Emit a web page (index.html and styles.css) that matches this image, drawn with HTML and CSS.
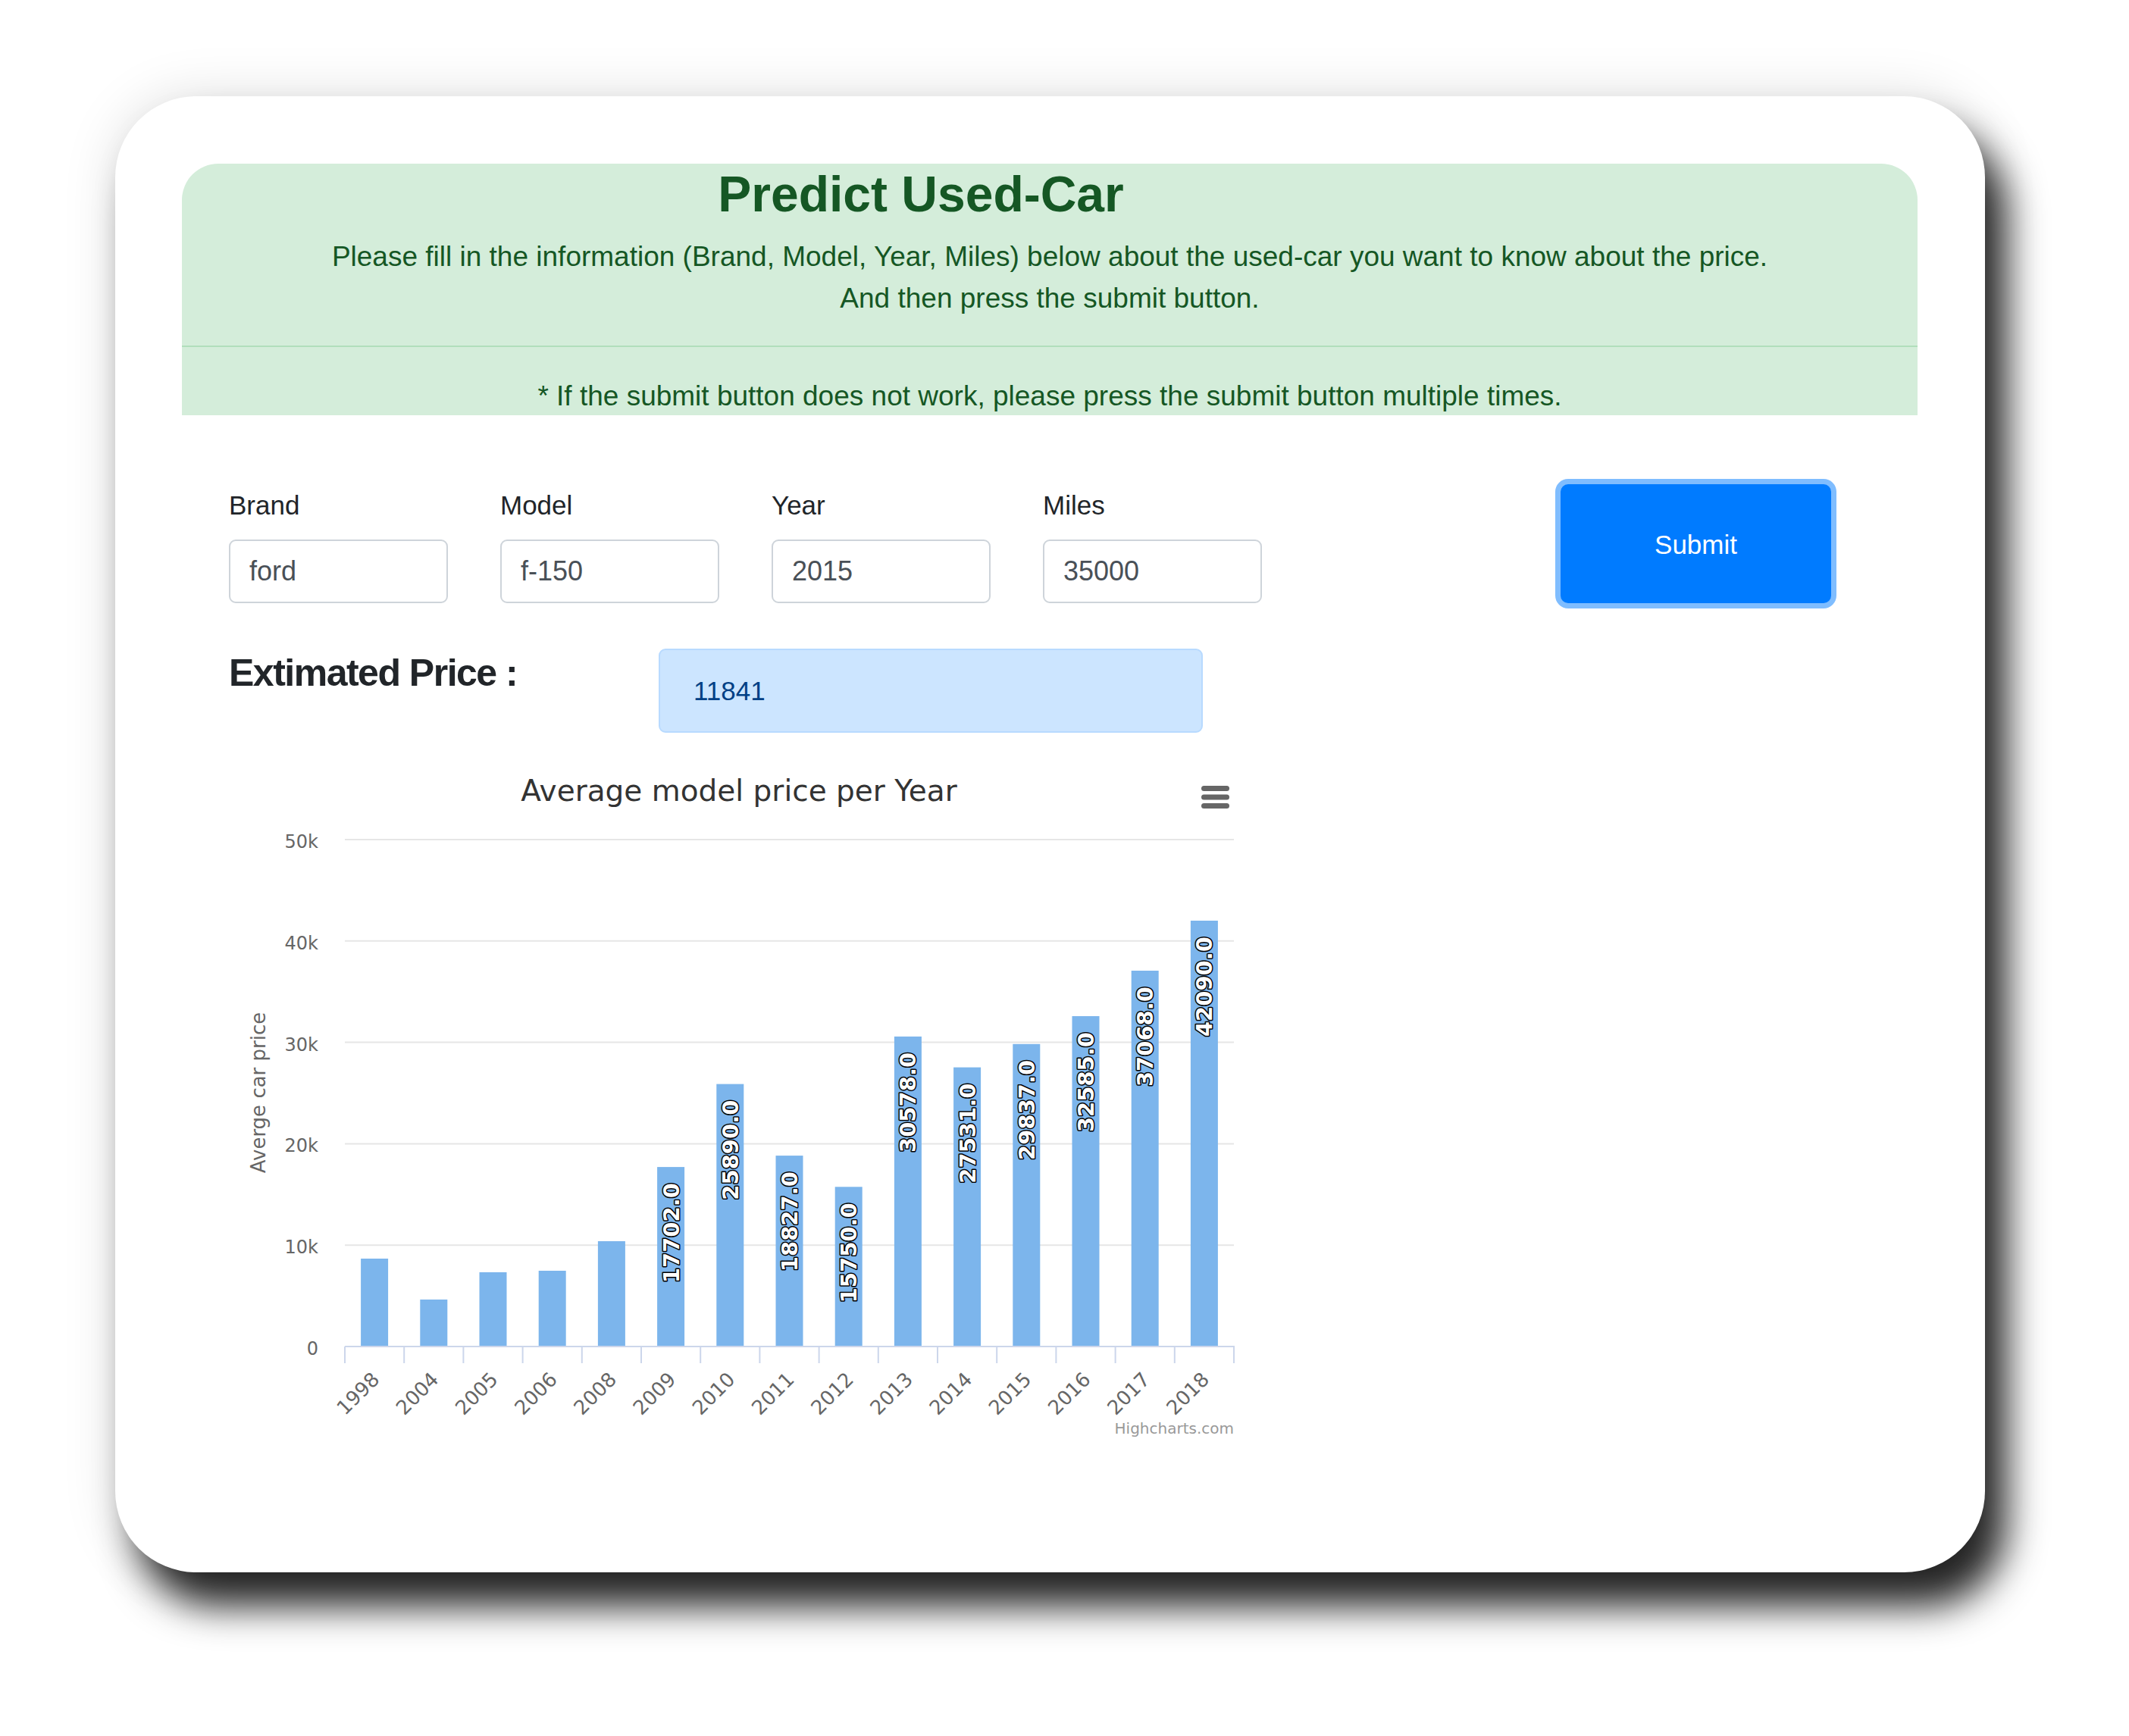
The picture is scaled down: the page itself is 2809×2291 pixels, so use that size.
FILE: index.html
```html
<!DOCTYPE html>
<html lang="en">
<head>
<meta charset="utf-8">
<title>Predict Used-Car</title>
<link rel="stylesheet" href="styles.css">
</head>
<body>
<div class="card">
  <div class="alert">
    <h1 class="title">Predict Used-Car</h1>
    <p class="lead">Please fill in the information (Brand, Model, Year, Miles) below about the used-car you want to know about the price.<br>And then press the submit button.</p>
    <hr class="divider">
    <p class="note">* If the submit button does not work, please press the submit button multiple times.</p>
  </div>
  <div class="content">
    <form class="form-row">
      <div class="field"><label>Brand</label><input type="text" value="ford"></div>
      <div class="field"><label>Model</label><input type="text" value="f-150"></div>
      <div class="field"><label>Year</label><input type="text" value="2015"></div>
      <div class="field"><label>Miles</label><input type="text" value="35000"></div>
      <button type="button" class="submit">Submit</button>
    </form>
    <div class="price-row">
      <h4 class="price-label">Extimated Price :</h4>
      <div class="price-box">11841</div>
    </div>
    <div class="chart">
      <svg width="1348" height="905" viewBox="0 0 1348 905" xmlns="http://www.w3.org/2000/svg">
        <text class="c-title" x="673" y="57" text-anchor="middle">Average model price per Year</text>
        <g class="c-menu">
          <line x1="1286.5" y1="40.5" x2="1316.5" y2="40.5"/>
          <line x1="1286.5" y1="52" x2="1316.5" y2="52"/>
          <line x1="1286.5" y1="63.5" x2="1316.5" y2="63.5"/>
        </g>
        <g class="c-grid">
          <line x1="153" y1="108" x2="1326" y2="108"/>
          <line x1="153" y1="241.8" x2="1326" y2="241.8"/>
          <line x1="153" y1="375.6" x2="1326" y2="375.6"/>
          <line x1="153" y1="509.4" x2="1326" y2="509.4"/>
          <line x1="153" y1="643.2" x2="1326" y2="643.2"/>
        </g>
        <g class="c-ylab">
          <text x="118" y="119" text-anchor="end">50k</text>
          <text x="118" y="252.8" text-anchor="end">40k</text>
          <text x="118" y="386.6" text-anchor="end">30k</text>
          <text x="118" y="520.4" text-anchor="end">20k</text>
          <text x="118" y="654.2" text-anchor="end">10k</text>
          <text x="118" y="788" text-anchor="end">0</text>
        </g>
        <text class="c-ytitle" transform="translate(48 442) rotate(-90)" text-anchor="middle">Averge car price</text>
        <g class="c-bars">
          <rect x="174.1" y="661.0" width="36" height="116.0"/>
          <rect x="252.3" y="715.0" width="36" height="62.0"/>
          <rect x="330.5" y="679.0" width="36" height="98.0"/>
          <rect x="408.7" y="677.0" width="36" height="100.0"/>
          <rect x="486.9" y="638.0" width="36" height="139.0"/>
          <rect x="565.1" y="540.1" width="36" height="236.9"/>
          <rect x="643.3" y="430.6" width="36" height="346.4"/>
          <rect x="721.5" y="525.1" width="36" height="251.9"/>
          <rect x="799.7" y="566.3" width="36" height="210.7"/>
          <rect x="877.9" y="367.9" width="36" height="409.1"/>
          <rect x="956.1" y="408.6" width="36" height="368.4"/>
          <rect x="1034.3" y="377.8" width="36" height="399.2"/>
          <rect x="1112.5" y="341.0" width="36" height="436.0"/>
          <rect x="1190.7" y="281.0" width="36" height="496.0"/>
          <rect x="1268.9" y="215.0" width="36" height="562.0"/>
        </g>
        <g class="c-axis">
          <line x1="153" y1="777" x2="1327" y2="777"/>
          <line x1="153" y1="777" x2="153" y2="799"/>
          <line x1="231.2" y1="777" x2="231.2" y2="799"/>
          <line x1="309.4" y1="777" x2="309.4" y2="799"/>
          <line x1="387.6" y1="777" x2="387.6" y2="799"/>
          <line x1="465.8" y1="777" x2="465.8" y2="799"/>
          <line x1="544" y1="777" x2="544" y2="799"/>
          <line x1="622.2" y1="777" x2="622.2" y2="799"/>
          <line x1="700.4" y1="777" x2="700.4" y2="799"/>
          <line x1="778.6" y1="777" x2="778.6" y2="799"/>
          <line x1="856.8" y1="777" x2="856.8" y2="799"/>
          <line x1="935" y1="777" x2="935" y2="799"/>
          <line x1="1013.2" y1="777" x2="1013.2" y2="799"/>
          <line x1="1091.4" y1="777" x2="1091.4" y2="799"/>
          <line x1="1169.6" y1="777" x2="1169.6" y2="799"/>
          <line x1="1247.8" y1="777" x2="1247.8" y2="799"/>
          <line x1="1326" y1="777" x2="1326" y2="799"/>
        </g>
        <g class="c-dlab" text-anchor="end">
          <text transform="translate(593.6 561.1) rotate(-90)">17702.0</text>
          <text transform="translate(671.8 451.6) rotate(-90)">25890.0</text>
          <text transform="translate(750.0 546.1) rotate(-90)">18827.0</text>
          <text transform="translate(828.2 587.3) rotate(-90)">15750.0</text>
          <text transform="translate(906.4 388.9) rotate(-90)">30578.0</text>
          <text transform="translate(984.6 429.6) rotate(-90)">27531.0</text>
          <text transform="translate(1062.8 398.8) rotate(-90)">29837.0</text>
          <text transform="translate(1141.0 362.0) rotate(-90)">32585.0</text>
          <text transform="translate(1219.2 302.0) rotate(-90)">37068.0</text>
          <text transform="translate(1297.4 236.0) rotate(-90)">42090.0</text>
        </g>
        <g class="c-xlab" text-anchor="end">
          <text transform="translate(200.1 822) rotate(-45)">1998</text>
          <text transform="translate(278.3 822) rotate(-45)">2004</text>
          <text transform="translate(356.5 822) rotate(-45)">2005</text>
          <text transform="translate(434.7 822) rotate(-45)">2006</text>
          <text transform="translate(512.9 822) rotate(-45)">2008</text>
          <text transform="translate(591.1 822) rotate(-45)">2009</text>
          <text transform="translate(669.3 822) rotate(-45)">2010</text>
          <text transform="translate(747.5 822) rotate(-45)">2011</text>
          <text transform="translate(825.7 822) rotate(-45)">2012</text>
          <text transform="translate(903.9 822) rotate(-45)">2013</text>
          <text transform="translate(982.1 822) rotate(-45)">2014</text>
          <text transform="translate(1060.3 822) rotate(-45)">2015</text>
          <text transform="translate(1138.5 822) rotate(-45)">2016</text>
          <text transform="translate(1216.7 822) rotate(-45)">2017</text>
          <text transform="translate(1294.9 822) rotate(-45)">2018</text>
        </g>
        <text class="c-credits" x="1326" y="892" text-anchor="end">Highcharts.com</text>
      </svg>
    </div>
  </div>
</div>
</body>
</html>
```

FILE: styles.css
```css
html, body {
  margin: 0;
  padding: 0;
  background: #ffffff;
}

body {
  min-height: 2291px;
  padding: 127px 0 0 152px;
  box-sizing: border-box;
  font-family: "Liberation Sans", Arial, sans-serif;
  color: #212529;
}

.card {
  box-sizing: border-box;
  width: 2467px;
  height: 1948px;
  padding: 89px 89px 0 88px;
  background: #ffffff;
  border-radius: 107px;
  box-shadow: 28px 45px 50px rgba(0, 0, 0, 0.85), 0 0 70px rgba(0, 0, 0, 0.13);
}

.alert {
  box-sizing: border-box;
  height: 332px;
  overflow: hidden;
  background: #d4edda;
  color: #155724;
  border-radius: 48px 48px 0 0;
  text-align: center;
}

.title {
  margin: 0;
  padding-right: 340px;
  font-size: 66px;
  line-height: 80px;
  font-weight: 700;
}

.lead {
  margin: 15px 0 0;
  font-size: 37px;
  line-height: 55px;
}

.divider {
  margin: 35px 0 0;
  height: 0;
  border: 0;
  border-top: 2px solid #b1dfbb;
}

.note {
  margin: 37px 0 0;
  font-size: 37px;
  line-height: 55px;
}

.content {
  padding-left: 62px;
}

.form-row {
  display: flex;
  align-items: flex-start;
  margin: 92px 0 0;
}

.field {
  display: flex;
  flex-direction: column;
  width: 289px;
  margin-right: 69px;
}

.field label {
  font-size: 35px;
  line-height: 53px;
  color: #212529;
}

.field input {
  box-sizing: border-box;
  width: 100%;
  height: 84px;
  margin-top: 19px;
  padding: 0 25px;
  border: 2px solid #ced4da;
  border-radius: 9px;
  background: #ffffff;
  font-family: "Liberation Sans", Arial, sans-serif;
  font-size: 36px;
  color: #495057;
  outline: none;
}

.submit {
  box-sizing: border-box;
  width: 357px;
  height: 157px;
  margin: -1px 114px 0 auto;
  padding-top: 3px;
  border: 0;
  border-radius: 10px;
  background: #007bff;
  box-shadow: 0 0 0 7px rgba(0, 123, 255, 0.5);
  color: #ffffff;
  font-family: "Liberation Sans", Arial, sans-serif;
  font-size: 35px;
}

.price-row {
  display: flex;
  align-items: flex-start;
  margin-top: 55px;
}

.price-label {
  width: 567px;
  margin: 0;
  font-size: 50px;
  line-height: 75px;
  font-weight: 700;
  letter-spacing: -1.5px;
  color: #212529;
}

.price-box {
  box-sizing: border-box;
  display: flex;
  align-items: center;
  width: 718px;
  height: 111px;
  margin-top: 5px;
  padding: 0 44px;
  border: 2px solid #b8daff;
  border-radius: 9px;
  background: #cce5ff;
  color: #004085;
  font-size: 35px;
}

.chart {
  width: 1348px;
  height: 905px;
  margin-top: 33px;
}

.chart svg {
  display: block;
  font-family: "DejaVu Sans", Verdana, sans-serif;
}

.c-title {
  font-size: 39px;
  fill: #333333;
}

.c-menu line {
  stroke: #666666;
  stroke-width: 7;
  stroke-linecap: round;
}

.c-grid line {
  stroke: #e6e6e6;
  stroke-width: 2;
}

.c-axis line {
  stroke: #ccd6eb;
  stroke-width: 2;
}

.c-ylab text {
  font-size: 24px;
  fill: #666666;
}

.c-ytitle {
  font-size: 26px;
  fill: #666666;
}

.c-bars rect {
  fill: #7cb5ec;
}

.c-dlab text {
  font-size: 29px;
  font-weight: 700;
  fill: #ffffff;
  stroke: #000000;
  stroke-width: 3;
  stroke-linejoin: round;
  paint-order: stroke;
}

.c-xlab text {
  font-size: 26px;
  fill: #666666;
}

.c-credits {
  font-size: 20px;
  fill: #999999;
}
```
